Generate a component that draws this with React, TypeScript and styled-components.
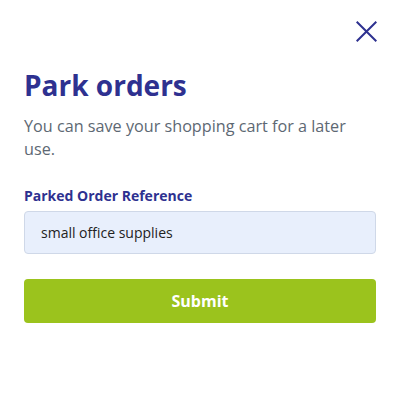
import styled, { createGlobalStyle } from "styled-components";

const GlobalStyle = createGlobalStyle`
  html, body {
    margin: 0;
    padding: 0;
    background: #ffffff;
  }
  body {
    font-family: "Open Sans", "Noto Sans", sans-serif;
  }
`;

export default function App() {
  return (
    <>
      <GlobalStyle />
      <Modal>
        <TopBar>
          <CloseButton aria-label="Close">
            <svg width="21" height="21" viewBox="0 0 21 21">
              <path d="M0.7 0.7 L20.3 20.3 M20.3 0.7 L0.7 20.3" stroke="#2e3190" strokeWidth="2" fill="none" />
            </svg>
          </CloseButton>
        </TopBar>
        <Title>Park orders</Title>
        <Description>You can save your shopping cart for a later use.</Description>
        <Label htmlFor="ref">Parked Order Reference</Label>
        <Input id="ref" defaultValue="small office supplies" />
        <SubmitButton>Submit</SubmitButton>
      </Modal>
    </>
  );
}

const Modal = styled.div`
  width: 397px;
  height: 409px;
  box-sizing: border-box;
  padding: 21px 21px 0 24px;
  display: flex;
  flex-direction: column;
`;

const TopBar = styled.div`
  display: flex;
  justify-content: flex-end;
`;

const CloseButton = styled.button`
  background: none;
  border: none;
  padding: 0;
  margin-right: -1px;
  width: 21px;
  height: 21px;
  cursor: pointer;
  display: flex;
`;

const Title = styled.h1`
  margin: 24px 0 0;
  font-size: 28px;
  line-height: 38px;
  font-weight: 700;
  color: #2e3190;
`;

const Description = styled.p`
  margin: 11px 0 0;
  font-size: 16.2px;
  line-height: 23px;
  color: #5d6873;
`;

const Label = styled.label`
  margin-top: 25px;
  font-size: 14px;
  line-height: 20px;
  font-weight: 700;
  color: #2e3190;
`;

const Input = styled.input`
  margin-top: 5px;
  height: 43px;
  box-sizing: border-box;
  padding: 0 16px;
  background: #e8effc;
  border: 1px solid #cfd8e8;
  border-radius: 4px;
  font-family: inherit;
  font-size: 14px;
  color: #222222;
  outline: none;
`;

const SubmitButton = styled.button`
  margin-top: 25px;
  height: 44px;
  border: none;
  border-radius: 4px;
  background: #9bc31d;
  color: #ffffff;
  font-family: inherit;
  font-size: 16px;
  font-weight: 700;
  cursor: pointer;
`;
